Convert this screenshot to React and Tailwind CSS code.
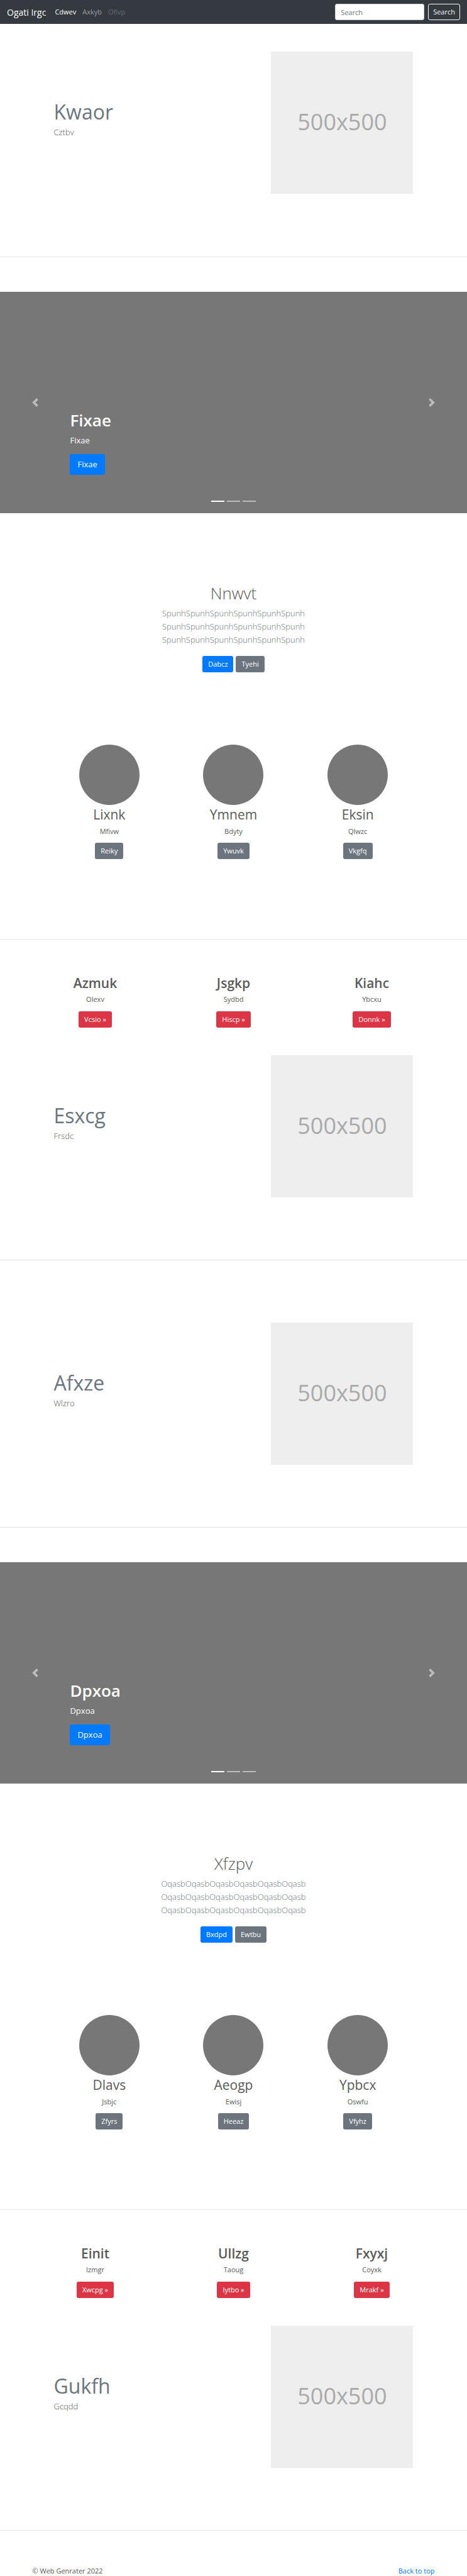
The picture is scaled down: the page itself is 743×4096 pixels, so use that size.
const btn = "inline-flex h-[26px] items-center rounded-[3px] px-[9px] text-[11px] leading-4 text-white";

function Featurette({ title, text, className = "" }) {
  return (
    <section className={`mx-auto w-full max-w-[660px] px-[44px] py-[44px] ${className}`}>
      <div className="grid grid-cols-12 gap-[21px]">
        <div className="col-span-7 pt-[79px]">
          <h2 className="mb-[5px] text-[32px] leading-[34px] text-[#6c757d]">{title}</h2>
          <p className="text-[13px] leading-[21px] font-light">{text}</p>
        </div>
        <div className="col-span-5 flex aspect-square items-center justify-center bg-[#eee] pb-[2px] text-[36px] leading-none text-[#aaa]">
          500x500
        </div>
      </div>
    </section>
  );
}

function Rule() {
  return <hr className="h-px border-0 bg-[#e5e5e5]" />;
}

function Carousel({ text }) {
  return (
    <section className="relative mb-[44px] h-[352px] bg-[#777] text-white">
      <div className="flex h-full flex-col items-start justify-end px-[15%] pb-[61px]">
        <h1 className="mb-[5px] text-[26px] leading-[33px] font-semibold">{text}</h1>
        <p className="mb-[11px] text-[13px] leading-[21px]">{text}</p>
        <a href="#" className="inline-flex h-[33px] items-center rounded-[3px] bg-[#007bff] px-[12px] text-[13px] leading-[21px]">
          {text}
        </a>
      </div>
      <button type="button" aria-label="Previous" className="absolute inset-y-0 left-0 flex w-[15%] items-center justify-center opacity-50">
        <svg viewBox="0 0 8 8" className="size-[14px]" fill="#fff">
          <path d="M5.25 0l-4 4 4 4 1.5-1.5L4.25 4l2.5-2.5L5.25 0z" />
        </svg>
      </button>
      <button type="button" aria-label="Next" className="absolute inset-y-0 right-0 flex w-[15%] items-center justify-center opacity-50">
        <svg viewBox="0 0 8 8" className="size-[14px]" fill="#fff">
          <path d="M2.75 0l-1.5 1.5L3.75 4l-2.5 2.5L2.75 8l4-4-4-4z" />
        </svg>
      </button>
      <div className="absolute inset-x-0 bottom-[18px] flex justify-center gap-[4px]">
        <span className="h-[2px] w-[21px] bg-white" />
        <span className="h-[2px] w-[21px] bg-white/50" />
        <span className="h-[2px] w-[21px] bg-white/50" />
      </div>
    </section>
  );
}

function Intro({ title, word, primary, secondary }) {
  const line = word.repeat(6);
  return (
    <section className="pt-[67px] pb-[115px] text-center">
      <h1 className="mb-[5px] text-[26px] leading-[33px] font-light">{title}</h1>
      <p className="mb-[15px] text-[13px] leading-[21px] font-light text-[#6c757d]">
        {line}
        <br />
        {line}
        <br />
        {line}
      </p>
      <div className="flex justify-center gap-[4px]">
        <a href="#" className={`${btn} bg-[#007bff]`}>{primary}</a>
        <a href="#" className={`${btn} bg-[#6c757d]`}>{secondary}</a>
      </div>
    </section>
  );
}

function Circles({ items }) {
  return (
    <section className="mx-auto grid w-full max-w-[593px] grid-cols-3 pb-[127px] text-center">
      {items.map(([title, text, label]) => (
        <div key={title} className="flex flex-col items-center">
          <div className="mb-[2px] size-[96px] rounded-full bg-[#777]" />
          <h2 className="mb-[6px] text-[21px] leading-[26px]">{title}</h2>
          <p className="mb-[10px] text-[11px] leading-[16px]">{text}</p>
          <a href="#" className={`${btn} bg-[#6c757d]`}>{label}</a>
        </div>
      ))}
    </section>
  );
}

function Columns({ items }) {
  return (
    <section className="mx-auto grid w-full max-w-[660px] grid-cols-3 pt-[56px] text-center">
      {items.map(([title, text, label]) => (
        <div key={title} className="flex flex-col items-center">
          <h2 className="mb-[5px] text-[21px] leading-[26px] font-semibold">{title}</h2>
          <p className="mb-[11px] text-[11px] leading-[16px]">{text}</p>
          <a href="#" className={`${btn} bg-[#dc3545]`}>{label} »</a>
        </div>
      ))}
    </section>
  );
}

export default function App() {
  return (
    <div className="bg-white font-['Open_Sans','Noto_Sans',sans-serif] text-[11px] text-[#5a5a5a]">
      <header className="flex h-[38px] items-center bg-[#343a40] px-[11px]">
        <a href="#" className="mr-[14px] text-[14px] leading-[21px] text-white">Ogati Irgc</a>
        <nav className="flex flex-1 gap-[10px] leading-4">
          <a href="#" className="text-white">Cdwev</a>
          <a href="#" className="text-white/50">Axkyb</a>
          <a href="#" className="text-white/25">Ofivp</a>
        </nav>
        <form className="flex gap-[6px]">
          <input
            type="text"
            aria-label="Search"
            placeholder="Search"
            className="h-[26px] w-[142px] rounded-[3px] border border-[#ced4da] bg-white px-[8px] text-[11px] placeholder:text-[#6c757d]"
          />
          <button type="button" className="h-[26px] rounded-[3px] border border-[#f8f9fa] px-[7px] text-[#f8f9fa]">
            Search
          </button>
        </form>
      </header>
      <main>
        <Featurette title="Kwaor" text="Cztbv" className="mb-[56px]" />
        <Rule />
        <div className="h-[55px]" />
        <Carousel text="Fixae" />
        <Intro title="Nnwvt" word="Spunh" primary="Dabcz" secondary="Tyehi" />
        <Circles
          items={[
            ["Lixnk", "Mfivw", "Reiky"],
            ["Ymnem", "Bdyty", "Ywuvk"],
            ["Eksin", "Qlwzc", "Vkgfq"],
          ]}
        />
        <Rule />
        <Columns
          items={[
            ["Azmuk", "Olexv", "Vcsio"],
            ["Jsgkp", "Sydbd", "Hiscp"],
            ["Kiahc", "Ybcxu", "Donnk"],
          ]}
        />
        <Featurette title="Esxcg" text="Frsdc" className="mb-[55px]" />
        <Rule />
        <Featurette title="Afxze" text="Wlzro" className="my-[55px]" />
        <Rule />
        <div className="h-[55px]" />
        <Carousel text="Dpxoa" />
        <Intro title="Xfzpv" word="Oqasb" primary="Bxdpd" secondary="Ewtbu" />
        <Circles
          items={[
            ["Dlavs", "Jsbjc", "Zfyrs"],
            ["Aeogp", "Ewisj", "Heeaz"],
            ["Ypbcx", "Oswfu", "Vfyhz"],
          ]}
        />
        <Rule />
        <Columns
          items={[
            ["Einit", "Izmgr", "Xwcpg"],
            ["Ullzg", "Taoug", "Iytbo"],
            ["Fxyxj", "Coyxk", "Mrakf"],
          ]}
        />
        <Featurette title="Gukfh" text="Gcqdd" className="mb-[55px]" />
        <Rule />
      </main>
      <footer className="mx-auto flex w-full max-w-[660px] justify-between px-[10px] pt-[56px] leading-4">
        <p>© Web Genrater 2022</p>
        <a href="#" className="text-[#007bff]">Back to top</a>
      </footer>
    </div>
  );
}
